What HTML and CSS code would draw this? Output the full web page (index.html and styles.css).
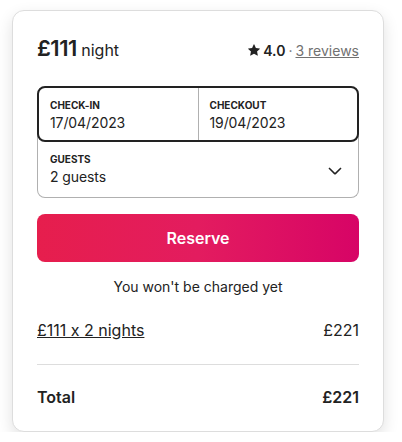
FILE: index.html
```html
<!DOCTYPE html>
<html lang="en">
<head>
  <meta charset="UTF-8" />
  <meta name="viewport" content="width=device-width, initial-scale=1.0"/>
  <title>Reserve</title>
  <link rel="stylesheet" href="styles.css">
</head>
<body>

  <div class="card">
    <div class="card-head">
      <div class="price"><strong>£111</strong> night</div>
      <div class="rating">
        <svg class="star" viewBox="0 0 32 32" width="12" height="12" aria-hidden="true">
          <path d="M15.1 1.58l-4.13 8.88-9.86 1.27a1 1 0 0 0-.54 1.74l7.3 6.57-1.97 9.85a1 1 0 0 0 1.48 1.06l8.62-5 8.63 5a1 1 0 0 0 1.48-1.06l-1.97-9.85 7.3-6.57a1 1 0 0 0-.55-1.73l-9.86-1.28-4.12-8.88a1 1 0 0 0-1.82 0z" fill="#222"/>
        </svg>
        <span class="score">4.0</span>
        <span class="dot">·</span>
        <a href="#" class="reviews">3 reviews</a>
      </div>
    </div>

    <div class="picker">
      <div class="dates">
        <div class="field">
          <div class="label">Check-in</div>
          <div class="value">17/04/2023</div>
        </div>
        <div class="field field-right">
          <div class="label">Checkout</div>
          <div class="value">19/04/2023</div>
        </div>
      </div>
      <div class="guests">
        <div class="field">
          <div class="label">Guests</div>
          <div class="value">2 guests</div>
        </div>
        <svg class="chevron" viewBox="0 0 32 32" width="16" height="16" aria-hidden="true">
          <path d="M28 12 16.7 23.3a1 1 0 0 1-1.4 0L4 12" fill="none" stroke="#222" stroke-width="3"/>
        </svg>
      </div>
    </div>

    <button class="reserve-btn">Reserve</button>
    <p class="note">You won't be charged yet</p>

    <div class="line">
      <a href="#" class="line-label">£111 x 2 nights</a>
      <span>£221</span>
    </div>

    <div class="total">
      <span>Total</span>
      <span>£221</span>
    </div>
  </div>

</body>
</html>
```

FILE: styles.css
```css
body {
  margin: 0;
  padding: 10px 0 0 12px;
  background: #fff;
  font-family: Inter, 'Noto Sans', sans-serif;
  font-feature-settings: 'calt' 0;
  color: #222;
}

.card {
  width: 322px;
  padding: 24px;
  border: 1px solid #dddddd;
  border-radius: 12px;
  box-shadow: 0 6px 16px rgba(0, 0, 0, 0.12);
  background: #fff;
}

.card-head {
  display: flex;
  justify-content: space-between;
  align-items: baseline;
  height: 28px;
  margin-bottom: 23px;
}

.price {
  font-size: 16px;
  font-weight: 400;
}

.price strong {
  font-size: 22px;
  font-weight: 600;
  letter-spacing: -0.5px;
}

.rating {
  display: flex;
  align-items: center;
  gap: 3px;
  font-size: 14px;
}

.score {
  font-weight: 600;
}

.dot {
  color: #717171;
}

.reviews {
  color: #717171;
  text-decoration: underline;
}

.dates {
  display: flex;
  border: 2px solid #222;
  border-radius: 8px;
  height: 52px;
  position: relative;
  z-index: 1;
  background: #fff;
}

.field {
  flex: 1;
  padding: 11px 11px 0;
}

.field-right {
  border-left: 1px solid #b0b0b0;
}

.label {
  font-size: 10px;
  font-weight: 700;
  text-transform: uppercase;
  line-height: 12px;
}

.value {
  font-size: 14px;
  line-height: 18px;
  margin-top: 3px;
  letter-spacing: -0.1px;
}

.guests {
  display: flex;
  align-items: center;
  box-sizing: border-box;
  height: 64px;
  margin-top: -8px;
  padding-top: 8px;
  border: 1px solid #b0b0b0;
  border-top: none;
  border-radius: 0 0 8px 8px;
}

.guests .field {
  padding-top: 11px;
  padding-left: 12px;
  align-self: flex-start;
}

.chevron {
  margin-right: 15px;
}

.reserve-btn {
  display: block;
  width: 100%;
  height: 48px;
  margin-top: 16px;
  border: none;
  border-radius: 8px;
  background: linear-gradient(to right, #e61e4d 0%, #e31c5f 50%, #d70466 100%);
  color: #fff;
  font-family: inherit;
  font-size: 16px;
  font-weight: 600;
  cursor: pointer;
}

.note {
  margin: 16px 0 0;
  text-align: center;
  font-size: 14px;
  line-height: 18px;
}

.line {
  display: flex;
  justify-content: space-between;
  font-size: 16px;
  line-height: 20px;
  margin-top: 24px;
  padding-bottom: 24px;
  border-bottom: 1px solid #dddddd;
}

.line-label {
  color: #222;
  text-decoration: underline;
}

.total {
  display: flex;
  justify-content: space-between;
  font-size: 16px;
  font-weight: 600;
  line-height: 20px;
  margin-top: 22px;
}
```
